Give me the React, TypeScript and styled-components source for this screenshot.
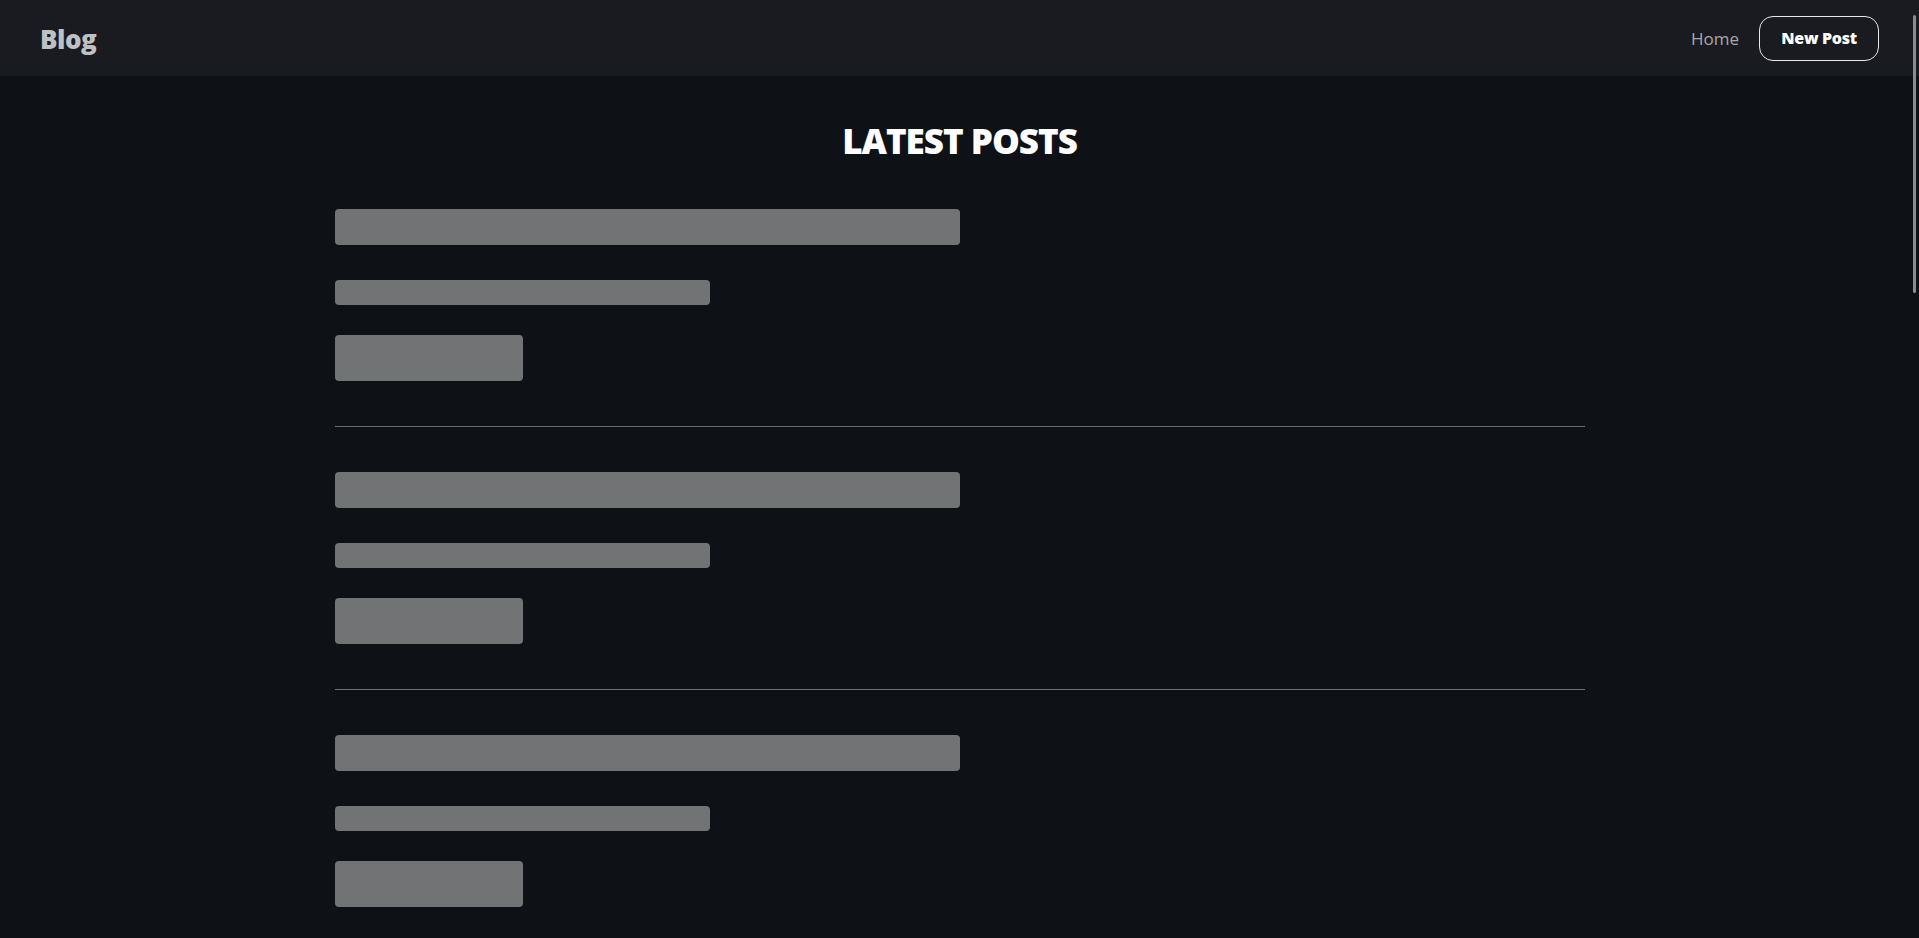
import React from "react";
import styled, { createGlobalStyle } from "styled-components";

const GlobalStyle = createGlobalStyle`
  html, body {
    margin: 0;
    padding: 0;
    background-color: #0e1116;
    overflow: hidden;
  }
  * {
    box-sizing: border-box;
  }
  body {
    font-family: "Open Sans", "Liberation Sans", sans-serif;
    color: #ffffff;
  }
`;

const Page = styled.div`
  min-height: 100vh;
  display: flex;
  flex-direction: column;
`;

const Header = styled.header`
  height: 76px;
  background-color: #1a1b20;
  display: flex;
  align-items: center;
  justify-content: space-between;
  padding: 0 40px;
`;

const Logo = styled.a`
  font-size: 26px;
  font-weight: 800;
  color: #bfc0c3;
  letter-spacing: -0.5px;
  text-decoration: none;
  padding-top: 2px;
`;

const Nav = styled.nav`
  display: flex;
  align-items: center;
  gap: 20px;
`;

const NavLink = styled.a`
  font-size: 17px;
  color: #a7a8ab;
  text-decoration: none;
`;

const NewPostButton = styled.button`
  height: 45px;
  width: 120px;
  border: 1px solid #e8e8e8;
  border-radius: 14px;
  background-color: transparent;
  color: #ffffff;
  font-family: inherit;
  font-size: 16px;
  font-weight: 800;
  letter-spacing: -0.3px;
  cursor: pointer;
`;

const Main = styled.main`
  width: 1250px;
  margin: 0 auto;
  padding-top: 44px;
`;

const Heading = styled.h1`
  margin: 0;
  text-align: center;
  font-size: 35px;
  line-height: 42px;
  font-weight: 800;
  letter-spacing: -1px;
  color: #ffffff;
`;

const PostList = styled.div`
  display: flex;
  flex-direction: column;
  margin-top: 2px;
`;

const PostItem = styled.article`
  display: flex;
  flex-direction: column;
  align-items: flex-start;
  padding: 45px 0;
  border-bottom: 1px solid #6b6d70;
`;

const Skeleton = styled.div<{ $w: number; $h: number; $mb?: number }>`
  width: ${(p) => p.$w}px;
  height: ${(p) => p.$h}px;
  margin-bottom: ${(p) => p.$mb ?? 0}px;
  background-color: #727374;
  border-radius: 4px;
`;

const ScrollThumb = styled.div`
  position: fixed;
  top: 15px;
  right: 3px;
  width: 3px;
  height: 278px;
  background-color: #8c8c8c;
  border-radius: 2px;
`;

function PostSkeleton() {
  return (
    <PostItem>
      <Skeleton $w={625} $h={36} $mb={35} />
      <Skeleton $w={375} $h={25} $mb={30} />
      <Skeleton $w={188} $h={46} />
    </PostItem>
  );
}

export default function App() {
  return (
    <Page>
      <GlobalStyle />
      <Header>
        <Logo href="#">Blog</Logo>
        <Nav>
          <NavLink href="#">Home</NavLink>
          <NewPostButton>New Post</NewPostButton>
        </Nav>
      </Header>
      <Main>
        <Heading>LATEST POSTS</Heading>
        <PostList>
          {[0, 1, 2, 3].map((i) => (
            <PostSkeleton key={i} />
          ))}
        </PostList>
      </Main>
      <ScrollThumb />
    </Page>
  );
}
